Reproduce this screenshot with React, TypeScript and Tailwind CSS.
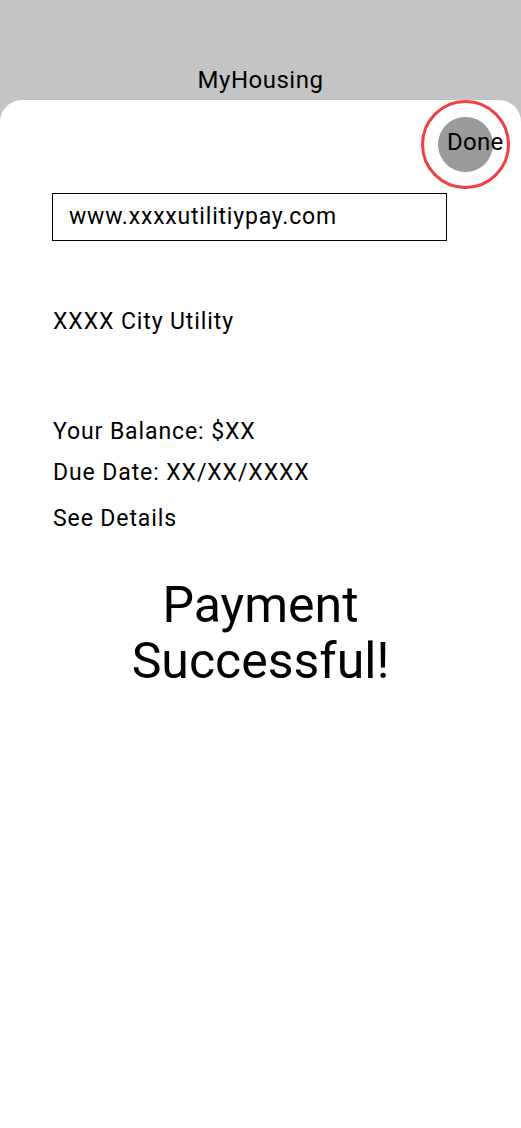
export default function App() {
  return (
    <div className="w-[521px] h-[1128px] bg-[#c4c4c4] flex flex-col" style={{ fontFamily: 'Roboto, sans-serif' }}>
      <div className="h-[100px] flex items-end justify-center pb-[6px]">
        <span className="text-[24px] leading-[28px] tracking-[0.5px] text-black">MyHousing</span>
      </div>
      <div className="flex-1 bg-white rounded-t-[22px] relative">
        <div className="absolute left-[421px] top-[0px] w-[89px] h-[89px] rounded-full border-[3px] border-[#f04040] flex items-center justify-center">
          <div className="w-[55px] h-[55px] rounded-full bg-[#9a9a9a] relative">
            <span className="absolute left-[9px] top-[11px] text-[24px] leading-[28px] tracking-[0.3px] text-black">Done</span>
          </div>
        </div>
        <div className="pt-[93px] pl-[52px] text-[23px] leading-[26px] tracking-[0.9px] text-black">
          <div className="w-[395px] h-[48px] border-[1.5px] border-black flex items-center pl-[16px]">
            <span className="tracking-[0.8px]">www.xxxxutilitiypay.com</span>
          </div>
          <div className="mt-[68px] pl-[1px]">XXXX City Utility</div>
          <div className="mt-[84px] pl-[1px]">Your Balance: $XX</div>
          <div className="mt-[15px] pl-[1px]">Due Date: XX/XX/XXXX</div>
          <div className="mt-[20px] pl-[1px]">See Details</div>
        </div>
        <div className="mt-[45px] text-center text-[50px] leading-[56px] text-black">
          Payment
          <br />
          Successful!
        </div>
      </div>
    </div>
  );
}
